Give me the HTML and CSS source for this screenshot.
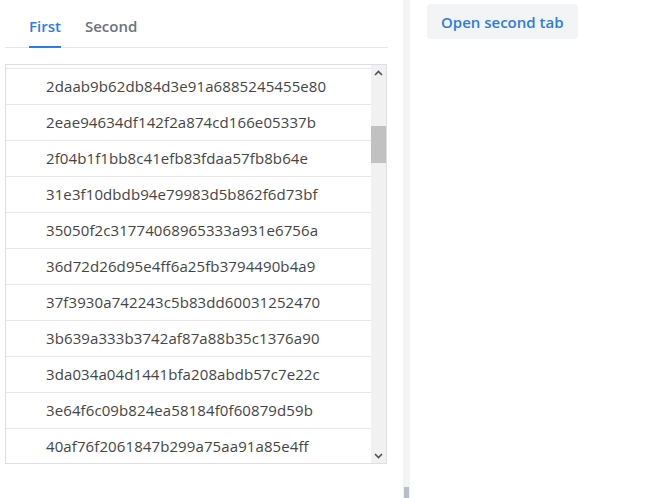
FILE: index.html
```html
<!DOCTYPE html>
<html lang="en">
<head>
<meta charset="utf-8">
<title>Tabs</title>
<link rel="stylesheet" href="styles.css">
</head>
<body>
<div class="page">
  <section class="left">
    <nav class="tabs">
      <div class="tab active">First</div>
      <div class="tab">Second</div>
    </nav>
    <div class="listbox">
      <div class="viewport">
        <ul class="list">
          <li class="partial" aria-hidden="true"></li>
          <li>2daab9b62db84d3e91a6885245455e80</li>
          <li>2eae94634df142f2a874cd166e05337b</li>
          <li>2f04b1f1bb8c41efb83fdaa57fb8b64e</li>
          <li>31e3f10dbdb94e79983d5b862f6d73bf</li>
          <li>35050f2c31774068965333a931e6756a</li>
          <li>36d72d26d95e4ff6a25fb3794490b4a9</li>
          <li>37f3930a742243c5b83dd60031252470</li>
          <li>3b639a333b3742af87a88b35c1376a90</li>
          <li>3da034a04d1441bfa208abdb57c7e22c</li>
          <li>3e64f6c09b824ea58184f0f60879d59b</li>
          <li>40af76f2061847b299a75aa91a85e4ff</li>
        </ul>
      </div>
      <div class="scrollbar">
        <div class="sb-btn">
          <svg width="9" height="6" viewBox="0 0 9 6"><path d="M1 5 L4.5 1.5 L8 5" fill="none" stroke="#505050" stroke-width="1.6"/></svg>
        </div>
        <div class="sb-track">
          <div class="sb-thumb"></div>
        </div>
        <div class="sb-btn">
          <svg width="9" height="6" viewBox="0 0 9 6"><path d="M1 1 L4.5 4.5 L8 1" fill="none" stroke="#505050" stroke-width="1.6"/></svg>
        </div>
      </div>
    </div>
  </section>
  <div class="divider"><div class="divider-thumb"></div></div>
  <section class="right">
    <button class="open-btn" type="button">Open second tab</button>
  </section>
</div>
</body>
</html>
```
FILE: styles.css
```css
* { box-sizing: border-box; }
html, body { margin: 0; padding: 0; background: #fff; }
body {
  font-family: "Open Sans", "Noto Sans", sans-serif;
  width: 658px;
  height: 498px;
  overflow: hidden;
}
.page {
  display: flex;
  height: 498px;
}
.left {
  width: 403px;
  flex: none;
  padding: 0 15px 0 5px;
}
.tabs {
  display: flex;
  gap: 24px;
  padding-left: 24px;
  border-bottom: 1px solid #e5e7eb;
}
.tab {
  padding: 16px 0 10px;
  line-height: 20px;
  font-size: 15px;
  font-weight: 600;
  color: #6b7280;
  border-bottom: 2px solid transparent;
  margin-bottom: -1px;
}
.tab.active {
  color: #2b7de9;
  border-bottom-color: #2b7de9;
}
.listbox {
  margin-top: 16px;
  width: 382px;
  height: 400px;
  border: 1px solid #dcdfe6;
  display: flex;
}
.viewport {
  flex: 1;
  overflow: hidden;
}
.list {
  list-style: none;
  margin: -32px 0 0;
  padding: 0;
}
.list li {
  height: 36px;
  line-height: 35px;
  border-bottom: 1px solid #e8e8e8;
  padding-left: 40px;
  font-size: 15px;
  letter-spacing: 0.1px;
  color: #454545;
  white-space: nowrap;
}
.scrollbar {
  width: 15px;
  flex: none;
  background: #f1f1f1;
  display: flex;
  flex-direction: column;
}
.sb-btn {
  height: 15px;
  display: flex;
  align-items: center;
  justify-content: center;
}
.sb-track {
  flex: 1;
  padding-top: 46px;
}
.sb-thumb {
  height: 37px;
  background: #c1c1c1;
}
.divider {
  width: 7px;
  flex: none;
  background: #f3f4f6;
  display: flex;
  flex-direction: column;
  justify-content: flex-end;
  align-items: center;
}
.divider-thumb {
  width: 5px;
  height: 11px;
  background: #b7bfca;
}
.right {
  flex: 1;
  padding: 4px 0 0 17px;
}
.open-btn {
  font-family: "Open Sans", "Noto Sans", sans-serif;
  font-size: 15px;
  font-weight: 600;
  color: #2b7de9;
  background: #f3f4f6;
  border: none;
  border-radius: 4px;
  height: 35px;
  padding: 0 14px;
  line-height: 20px;
  cursor: pointer;
}
```
